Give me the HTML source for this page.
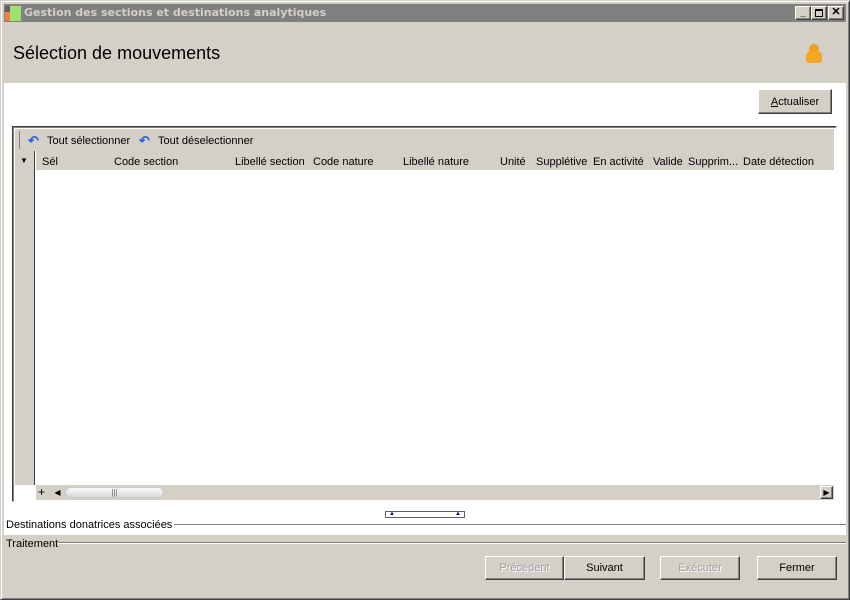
<!DOCTYPE html>
<html><head><meta charset="utf-8"><style>
*{margin:0;padding:0;box-sizing:border-box}
body{width:850px;height:600px;position:relative;overflow:hidden;background:#d4d0c8;font-family:"Liberation Sans",sans-serif;font-size:11px;color:#000}
.a{position:absolute}
.btn{position:absolute;background:#d4d0c8;border:1px solid;border-color:#fff #404040 #404040 #fff;box-shadow:inset -1px -1px 0 #808080;text-align:center;font-size:11px}
.dis{color:#a0a0a0;text-shadow:1px 1px 0 #fff}
</style></head><body>
<div class="a" style="left:0;top:0;width:850px;height:600px;border:1px solid;border-color:#d4d0c8 #404040 #404040 #d4d0c8;box-shadow:inset 1px 1px 0 #fff,inset -1px -1px 0 #808080"></div>
<div class="a" style="left:4px;top:4px;width:842px;height:18px;background:#808080"></div>
<div class="a" style="left:5px;top:6px;width:5px;height:6px;background:#606060"></div>
<div class="a" style="left:5px;top:12px;width:5px;height:9px;background:#f08040"></div>
<div class="a" style="left:10px;top:6px;width:11px;height:15px;background:#a0e070"></div>
<div class="a" style="left:24px;top:6px;color:#d4d0c8;font-family:'DejaVu Sans',sans-serif;font-size:11px;font-weight:bold">Gestion des sections et destinations analytiques</div>
<div class="btn" style="left:795px;top:6px;width:16px;height:14px;font-size:10px;line-height:11px;font-weight:bold">_</div>
<div class="btn" style="left:811px;top:6px;width:16px;height:14px"><div class="a" style="left:3px;top:2px;width:8px;height:8px;border:1px solid #000;border-top-width:2px"></div></div>
<div class="btn" style="left:828px;top:6px;width:16px;height:14px;font-weight:bold;line-height:11px">✕</div>
<div class="a" style="left:13px;top:43px;font-size:18px">Sélection de mouvements</div>
<div class="a" style="left:809px;top:44px;width:10px;height:9px;border-radius:50%;background:#f0a020"></div>
<div class="a" style="left:806px;top:51px;width:16px;height:12px;border-radius:5px 5px 3px 3px;background:#f5a623"></div>
<div class="a" style="left:4px;top:83px;width:842px;height:452px;background:#fff"></div>
<div class="btn" style="left:758px;top:89px;width:74px;height:25px;line-height:24px"><u>A</u>ctualiser</div>
<div class="a" style="left:12px;top:126px;width:825px;height:376px;border:1px solid;border-color:#404040 #fff #fff #404040;box-shadow:inset 1px 1px 0 #808080;background:#fff"></div>
<div class="a" style="left:15px;top:129px;width:819px;height:22px;background:#d4d0c8"></div>
<div class="a" style="left:19px;top:131px;width:1px;height:18px;background:#808080"></div>
<div class="a" style="left:28px;top:133px;color:#3060d0;font-size:13px;font-weight:bold">↶</div>
<div class="a" style="left:47px;top:135px">Tout sélectionner</div>
<div class="a" style="left:139px;top:133px;color:#3060d0;font-size:13px;font-weight:bold">↶</div>
<div class="a" style="left:158px;top:135px">Tout déselectionner</div>
<div class="a" style="left:15px;top:151px;width:20px;height:334px;background:#d4d0c8;border-right:1px solid #404040"></div>
<div class="a" style="left:20px;top:156px;font-size:8px">▼</div>
<div class="a" style="left:36px;top:151px;width:798px;height:19px;background:#d4d0c8"></div>
<div class="a" style="left:0;top:155px;width:850px;height:14px;top:156px">
<span class="a" style="left:42px">Sél</span><span class="a" style="left:114px">Code section</span><span class="a" style="left:235px">Libellé section</span><span class="a" style="left:313px">Code nature</span><span class="a" style="left:403px">Libellé nature</span><span class="a" style="left:500px">Unité</span><span class="a" style="left:536px">Supplétive</span><span class="a" style="left:593px">En activité</span><span class="a" style="left:653px">Valide</span><span class="a" style="left:688px">Supprim...</span><span class="a" style="left:743px">Date détection</span></div>
<div class="a" style="left:36px;top:485px;width:798px;height:15px;background:#d4d0c8"></div>
<div class="a" style="left:38px;top:485px;font-size:12px">+</div>
<div class="a" style="left:51px;top:486px;width:13px;height:13px;font-size:8px;line-height:13px;text-align:center">◀</div>
<div class="a" style="left:65px;top:487px;width:99px;height:11px;border-radius:6px;background:linear-gradient(#fafafa,#d8d8d8);border:1px solid #c8c8c8;text-align:center;font-size:8px;line-height:9px;color:#666">|||</div>
<div class="btn" style="left:820px;top:486px;width:13px;height:13px;font-size:8px;line-height:11px">▶</div>
<div class="a" style="left:385px;top:511px;width:80px;height:7px;border:1px solid #606060;background:#fff"></div>
<div class="a" style="left:389px;top:511px;font-size:6px;color:#000080">▲</div>
<div class="a" style="left:455px;top:511px;font-size:6px;color:#000080">▲</div>
<div class="a" style="left:6px;top:519px">Destinations donatrices associées</div>
<div class="a" style="left:174px;top:524px;width:672px;height:1px;background:#808080"></div>
<div class="a" style="left:6px;top:538px">Traitement</div>
<div class="a" style="left:58px;top:542px;width:788px;height:2px;border-top:1px solid #808080;border-bottom:1px solid #fff"></div>
<div class="btn dis" style="left:485px;top:556px;width:79px;height:24px;line-height:23px">Précédent</div>
<div class="btn" style="left:564px;top:556px;width:81px;height:24px;line-height:23px">Suivant</div>
<div class="btn dis" style="left:660px;top:556px;width:80px;height:24px;line-height:23px">Exécuter</div>
<div class="btn" style="left:757px;top:556px;width:80px;height:24px;line-height:23px">Fermer</div>
</body></html>
